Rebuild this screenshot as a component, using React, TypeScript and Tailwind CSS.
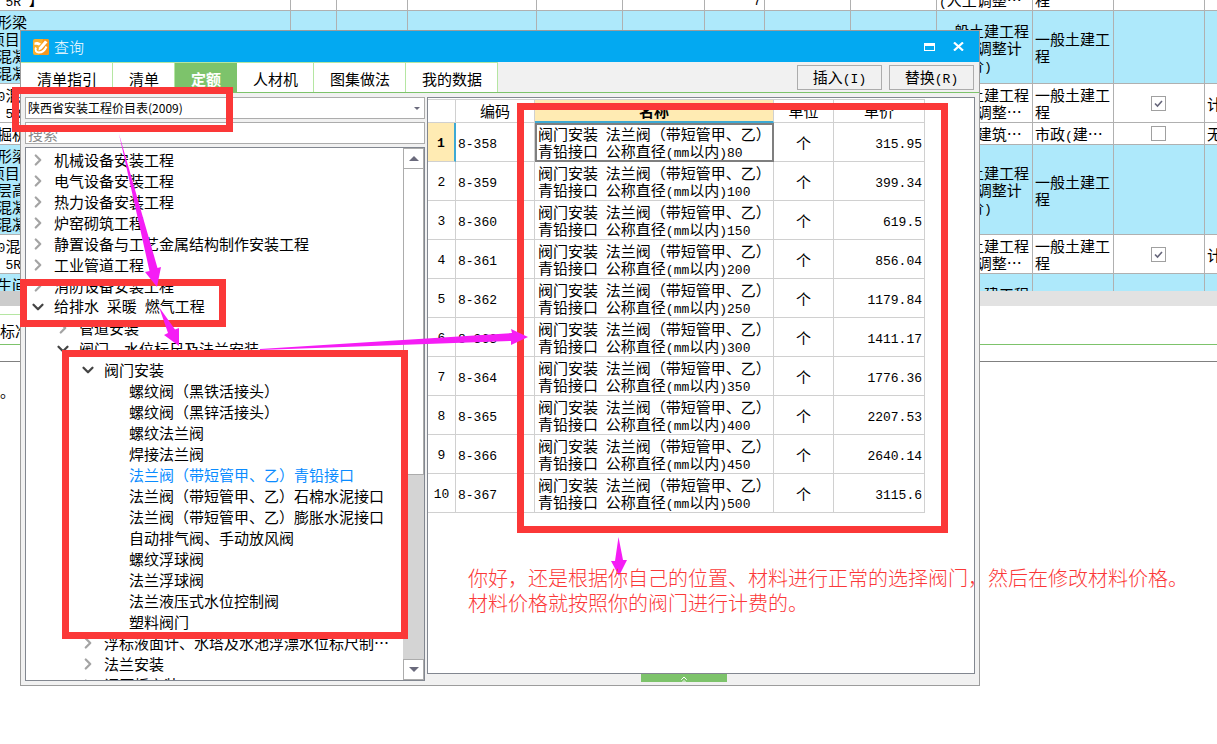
import { useState } from 'react'
import { ChevronDown, ChevronRight, ChevronsUp } from 'lucide-react'
import clsx from 'clsx'

interface TreeNode {
  label: string
  level: 0 | 1 | 2 | 3
  state: 'open' | 'closed' | 'leaf'
}

interface BudgetRow {
  height: string
  blue?: boolean
  name: string[]
  qty?: string
  fee?: string[]
  major?: string[]
  checked?: boolean
  note?: string
}

const tabs = ['清单指引', '清单', '定额', '人材机', '图集做法', '我的数据']

const tree: TreeNode[] = [
  { label: '机械设备安装工程', level: 0, state: 'closed' },
  { label: '电气设备安装工程', level: 0, state: 'closed' },
  { label: '热力设备安装工程', level: 0, state: 'closed' },
  { label: '炉窑砌筑工程', level: 0, state: 'closed' },
  { label: '静置设备与工艺金属结构制作安装工程', level: 0, state: 'closed' },
  { label: '工业管道工程', level: 0, state: 'closed' },
  { label: '消防设备安装工程', level: 0, state: 'closed' },
  { label: '给排水 采暖 燃气工程', level: 0, state: 'open' },
  { label: '管道安装', level: 1, state: 'closed' },
  { label: '阀门、水位标尺及法兰安装', level: 1, state: 'open' },
  { label: '阀门安装', level: 2, state: 'open' },
  { label: '螺纹阀（黑铁活接头）', level: 3, state: 'leaf' },
  { label: '螺纹阀（黑锌活接头）', level: 3, state: 'leaf' },
  { label: '螺纹法兰阀', level: 3, state: 'leaf' },
  { label: '焊接法兰阀', level: 3, state: 'leaf' },
  { label: '法兰阀（带短管甲、乙）青铅接口', level: 3, state: 'leaf' },
  { label: '法兰阀（带短管甲、乙）石棉水泥接口', level: 3, state: 'leaf' },
  { label: '法兰阀（带短管甲、乙）膨胀水泥接口', level: 3, state: 'leaf' },
  { label: '自动排气阀、手动放风阀', level: 3, state: 'leaf' },
  { label: '螺纹浮球阀', level: 3, state: 'leaf' },
  { label: '法兰浮球阀', level: 3, state: 'leaf' },
  { label: '法兰液压式水位控制阀', level: 3, state: 'leaf' },
  { label: '塑料阀门', level: 3, state: 'leaf' },
  { label: '浮标液面计、水塔及水池浮漂水位标尺制…', level: 2, state: 'closed' },
  { label: '法兰安装', level: 2, state: 'closed' },
  { label: '调压板安装', level: 2, state: 'closed' },
]

const indent = ['pl-[3px]', 'pl-7', 'pl-[53px]', 'pl-[78px]']

const quotas = [
  { code: '8-358', size: 80, price: '315.95' },
  { code: '8-359', size: 100, price: '399.34' },
  { code: '8-360', size: 150, price: '619.5' },
  { code: '8-361', size: 200, price: '856.04' },
  { code: '8-362', size: 250, price: '1179.84' },
  { code: '8-363', size: 300, price: '1411.17' },
  { code: '8-364', size: 350, price: '1776.36' },
  { code: '8-365', size: 400, price: '2207.53' },
  { code: '8-366', size: 450, price: '2640.14' },
  { code: '8-367', size: 500, price: '3115.6' },
]

const feeFull = ['一般土建工程', '(人工调整计', '入差价)']
const feeShort = ['一般土建工程', '(人工调整…']
const civil = ['一般土建工', '程']

const budget: BudgetRow[] = [
  { height: 'h-[39px]', name: ['C30混', '32 5R 】'], qty: '7', fee: feeShort, major: civil },
  { height: 'h-[73px]', blue: true, name: ['矩形梁', '(项目', '土混凝', '土混凝'], fee: feeFull, major: civil },
  { height: 'h-[39px]', name: ['C30混', '32 5R'], fee: feeShort, major: civil, checked: true, note: '计' },
  { height: 'h-[22px]', name: ['挖掘机'], fee: ['市政(建筑…'], major: ['市政(建…'], checked: false, note: '无' },
  { height: 'h-[90px]', blue: true, name: ['矩形梁', '(项目', '、层高', '土混凝', '土混凝'], fee: feeFull, major: civil },
  { height: 'h-[39px]', name: ['C30混', '32 5R'], fee: feeShort, major: civil, checked: true, note: '计' },
  { height: 'h-[73px]', blue: true, name: ['卫生间', '(项目', '土混凝', '土混凝'], fee: feeFull, major: civil },
]

const cell = 'border-r border-b border-[#b0b0b0] p-0 pl-[2px]'
const grid = 'border-r border-b border-[#d0d0d0] p-0'

// Latin runs are set half as wide as the Chinese characters
function Mixed({ text }: { text: string }) {
  return (
    <>
      {text.split(/([\x20-\x7e]+)/).map((part, i) =>
        i % 2 ? (
          <span key={i} className="font-['Liberation_Mono',monospace] text-[13px] whitespace-pre">{part}</span>
        ) : (
          part
        )
      )}
    </>
  )
}

function Lines({ lines }: { lines?: string[] }) {
  return (
    <>
      {lines?.map((line, i) => (
        <div key={i} className="h-[17px] whitespace-nowrap">
          <Mixed text={line} />
        </div>
      ))}
    </>
  )
}

function BudgetSheet() {
  return (
    <div>
      <div className="h-[291px] overflow-hidden">
        <table className="-mt-7 -ml-[18px] w-[calc(100%+80px)] table-fixed border-separate border-spacing-0">
          <colgroup>
            <col className="w-[309px]" />
            <col className="w-[46px]" />
            <col className="w-[71px]" />
            <col className="w-[129px]" />
            <col className="w-[86px]" />
            <col className="w-[82px]" />
            <col className="w-[60px]" />
            <col className="w-[86px]" />
            <col className="w-[86px]" />
            <col className="w-[96px]" />
            <col className="w-[81px]" />
            <col className="w-[91px]" />
            <col />
          </colgroup>
          <tbody>
            {budget.map((row, i) => (
              <tr key={i} className={clsx(row.height, row.blue && 'bg-[#aee9fb]')}>
                <td className="border-r border-b border-[#b0b0b0] p-0">
                  <Lines lines={row.name} />
                </td>
                <td className={cell} />
                <td className={cell} />
                <td className={cell} />
                <td className={cell} />
                <td className={cell} />
                <td className={clsx(cell, 'pr-[3px] text-right align-bottom')}>
                  {row.qty && <Mixed text={row.qty} />}
                </td>
                <td className={cell} />
                <td className={cell} />
                <td className={cell}><Lines lines={row.fee} /></td>
                <td className={cell}><Lines lines={row.major} /></td>
                <td className="border-r border-b border-[#b0b0b0] p-0 pr-[2px]">
                  {row.checked !== undefined && (
                    <label className="relative mx-auto block size-[15px]">
                      <input
                        type="checkbox"
                        defaultChecked={row.checked}
                        aria-label="汇总"
                        className="peer block size-[15px] appearance-none border border-[#a0a0a0] bg-white"
                      />
                      <svg viewBox="0 0 15 15" className="pointer-events-none absolute inset-0 hidden peer-checked:block">
                        <path d="M4 7.5 L6.5 10 L11 5" fill="none" stroke="#66667a" strokeWidth="1.6" />
                      </svg>
                    </label>
                  )}
                </td>
                <td className={cell}>{row.note}</td>
              </tr>
            ))}
          </tbody>
        </table>
      </div>
      <div className="flex h-[15px]">
        <div className="w-10 bg-[#cccccc]" />
        <div className="flex-1 bg-[#e2e2e2]" />
      </div>
      <div className="border-b border-[#7dc36b] pt-2">
        <div className="flex h-[30px] w-16 items-center border-t border-[#b5e6a2] pt-px">标准换算</div>
      </div>
      <div className="h-[17px] border-b border-[#808080]" />
      <p className="pt-5">。</p>
    </div>
  )
}

function TitleBar() {
  return (
    <div className="flex h-[31px] items-center bg-[#03a9f1] pl-3 text-white">
      <svg viewBox="0 0 16 16" className="mr-[5px] size-4" aria-hidden="true">
        <rect width="16" height="16" rx="2" fill="#fbb02d" />
        <path d="M10 0h4a2 2 0 0 1 2 2v12a2 2 0 0 1-2 2H6z" fill="#f5981e" />
        <path d="M1.5 3.5c2-1 4.500-.5 6.500 1l-2 2C4.500 5.500 3 5.500 1.500 6z" fill="#fff" />
        <path d="M6 8.500 12 1.500l2.500 1.700L8.500 10.200 5.500 11.500z" fill="#fff" />
        <path d="M3 8.500c-1.500 3 .5 5 3 5 3 0 6-2.500 7.500-6" fill="none" stroke="#fff" strokeWidth="2" />
      </svg>
      <h1 className="flex-1 font-light">查询</h1>
      <button aria-label="最大化" className="mr-[18px]">
        <svg viewBox="0 0 11 8" className="h-2 w-[11px]">
          <path d="M0 0h11v8H0zM1 3v4h9V3z" fill="#fff" fillRule="evenodd" />
        </svg>
      </button>
      <button aria-label="关闭" className="mr-[15px]">
        <svg viewBox="0 0 11 9" className="h-[9px] w-[11px]">
          <path d="M1 0.500 10 8.500M10 0.500 1 8.500" stroke="#fff" strokeWidth="2.200" />
        </svg>
      </button>
    </div>
  )
}

function Toolbar() {
  const [active, setActive] = useState('定额')
  return (
    <div className="flex h-[31px] border-b border-[#7dc36b]">
      <div role="tablist" className="flex border-t border-[#b5e6a2]">
        {tabs.map((tab) => (
          <button
            key={tab}
            role="tab"
            aria-selected={tab === active}
            onClick={() => setActive(tab)}
            className={clsx(
              'border-r pt-[2px] pr-[15px] pl-4',
              tab === active ? 'border-[#7dc36b] bg-[#7dc36b] font-bold text-white' : 'border-[#b5e6a2] bg-white'
            )}
          >
            {tab}
          </button>
        ))}
      </div>
      <div className="flex flex-1 justify-end gap-[7px] px-[5px] pt-[3px]">
        <button className="h-[25px] w-[85px] border border-[#acacac]"><Mixed text="插入(I)" /></button>
        <button className="h-[25px] w-[85px] border border-[#acacac]"><Mixed text="替换(R)" /></button>
      </div>
    </div>
  )
}

function TreePanel() {
  const [selected, setSelected] = useState('法兰阀（带短管甲、乙）青铅接口')
  return (
    <div className="flex min-h-0 flex-1 border border-[#828790] bg-white">
      <ul role="tree" aria-label="章节" className="min-w-0 flex-1 overflow-hidden pt-px">
        {tree.map((node) => (
          <li
            key={node.label}
            role="treeitem"
            aria-selected={node.label === selected}
            aria-expanded={node.state === 'leaf' ? undefined : node.state === 'open'}
            className={indent[node.level]}
          >
            <button
              onClick={() => setSelected(node.label)}
              className={clsx('flex h-[21px] items-center whitespace-nowrap', node.label === selected && 'text-[#0a8cff]')}
            >
              <span className="flex w-[25px]">
                {node.state === 'closed' && <ChevronRight className="size-[18px] text-[#a4a4a4]" strokeWidth={3} />}
                {node.state === 'open' && <ChevronDown className="size-[18px] text-[#444444]" strokeWidth={3} />}
              </span>
              <span><Mixed text={node.label} /></span>
            </button>
          </li>
        ))}
      </ul>
      <div className="flex w-[21px] flex-col bg-[#d4d4d4]">
        <button aria-label="向上滚动" className="flex h-[21px] items-center justify-center border border-[#acacac] bg-white">
          <svg viewBox="0 0 10 5" className="h-[5px] w-[10px]"><path d="M0 5 5 0l5 5z" fill="#6a6a7c" /></svg>
        </button>
        <div className="h-[306px] border border-t-0 border-[#acacac] bg-white" />
        <div className="flex-1" />
        <button aria-label="向下滚动" className="flex h-[21px] items-center justify-center border border-[#acacac] bg-white">
          <svg viewBox="0 0 10 5" className="h-[5px] w-[10px]"><path d="M0 0h10L5 5z" fill="#6a6a7c" /></svg>
        </button>
      </div>
    </div>
  )
}

function QuotaTable() {
  return (
    <div className="min-h-0 flex-1 border border-[#828790] bg-white pt-px">
      <table className="w-[497px] table-fixed border-separate border-spacing-0 border-t border-[#d0d0d0]">
        <colgroup>
          <col className="w-7" />
          <col className="w-[79px]" />
          <col className="w-[239px]" />
          <col className="w-[60px]" />
          <col className="w-[91px]" />
        </colgroup>
        <thead>
          <tr className="h-[23px] align-top">
            <th className={grid} />
            <th className={clsx(grid, 'pt-[2px] font-normal')}>编码</th>
            <th className={clsx(grid, 'border-b-2 border-b-[#3da9d4] bg-[#ffebb3] pt-[2px] font-bold')}>名称</th>
            <th className={clsx(grid, 'pt-[2px] font-normal')}>单位</th>
            <th className={clsx(grid, 'pt-[2px] font-normal')}>单价</th>
          </tr>
        </thead>
        <tbody>
          {quotas.map((q, i) => (
            <tr key={q.code} className="h-[39px]">
              <th
                scope="row"
                className={clsx(grid, i === 0 ? 'border-r-2 border-r-[#3da9d4] bg-[#ffebb3] font-bold' : 'font-normal')}
              >
                <Mixed text={String(i + 1)} />
              </th>
              <td className={clsx(grid, 'pt-[2px] pl-[2px]')}><Mixed text={q.code} /></td>
              <td className={clsx(grid, 'pl-[3px]', i === 0 && 'outline-2 -outline-offset-2 outline-[#7f7f7f]')}>
                <Lines lines={['阀门安装 法兰阀（带短管甲、乙）', `青铅接口 公称直径(mm以内)${q.size}`]} />
              </td>
              <td className={clsx(grid, 'text-center')}>个</td>
              <td className={clsx(grid, 'pt-[2px] pr-[2px] text-right')}><Mixed text={q.price} /></td>
            </tr>
          ))}
        </tbody>
      </table>
    </div>
  )
}

function QueryDialog() {
  return (
    <section className="absolute top-[30px] left-5 flex h-[656px] w-[960px] flex-col border border-[#9c9c9c] bg-[#f1f1f1]">
      <TitleBar />
      <Toolbar />
      <div className="flex min-h-0 flex-1 gap-[2px] px-1 pt-1">
        <div className="flex w-[400px] flex-col gap-[3px] pb-1">
          <div className="relative">
            <select
              aria-label="定额库"
              className="block h-[22px] w-full appearance-none border border-[#acacac] bg-white pl-[2px] text-xs"
            >
              <option>陕西省安装工程价目表(2009)</option>
            </select>
            <svg viewBox="0 0 6 3" className="pointer-events-none absolute top-[10px] right-[5px] h-[3px] w-[6px]">
              <path d="M0 0h6L3 3z" fill="#6a6a7c" />
            </svg>
          </div>
          <input
            aria-label="搜索"
            placeholder="搜索"
            className="block h-[22px] w-full border border-[#acacac] bg-white px-[2px] placeholder:text-[#8a8a8a]"
          />
          <TreePanel />
        </div>
        <div className="flex min-w-0 flex-1 flex-col">
          <QuotaTable />
          <div className="h-[11px] pr-[34px]">
            <button aria-label="展开" className="mx-auto flex h-2 w-[86px] justify-center overflow-hidden bg-[#7dc36b] text-white">
              <ChevronsUp className="size-3 shrink-0" />
            </button>
          </div>
        </div>
      </div>
    </section>
  )
}

// hand-drawn marks on top of everything
function Annotations() {
  return (
    <div className="pointer-events-none absolute inset-0">
      <div className="absolute top-[87px] left-3 h-[45px] w-[221px] border-7 border-[#fb3838]" />
      <div className="absolute top-[279px] left-5 h-12 w-[206px] border-7 border-[#fb3838]" />
      <div className="absolute top-[350px] left-[62px] h-[289px] w-[346px] border-7 border-[#fb3838]" />
      <div className="absolute top-[103px] left-[517px] h-[430px] w-[431px] border-7 border-[#fb3838]" />
      <svg width="640" height="600" className="absolute top-0 left-0" fill="#f51df5">
        <path d="M119 134 157.500 268 161 267 157 287 145 272 149.500 271z" />
        <path d="M159 307 175 329.500 179 328 179 346 164 335 168 333z" />
        <path d="M260 349 512 333 511 329 528 337 511 345 511 341 260 350z" />
        <path d="M618.500 537 623 560 627 560 619 576 611 561 615 561z" />
      </svg>
      <p className="absolute top-[565px] left-[468px] text-xl leading-[25px] font-light whitespace-nowrap text-[#fb3838]">
        你好，还是根据你自己的位置、材料进行正常的选择阀门，然后在修改材料价格。
        <br />
        材料价格就按照你的阀门进行计费的。
      </p>
    </div>
  )
}

export default function App() {
  return (
    <main
      lang="zh-CN"
      className="relative min-h-screen overflow-hidden bg-white font-['Noto_Sans_CJK_SC',sans-serif] text-[15px] leading-[17px] text-black"
    >
      <BudgetSheet />
      <QueryDialog />
      <Annotations />
    </main>
  )
}
